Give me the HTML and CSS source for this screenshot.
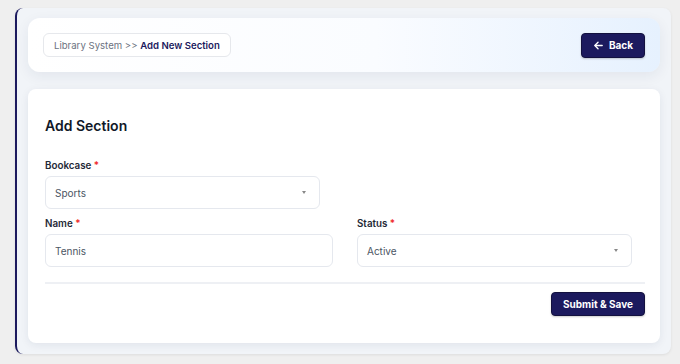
FILE: index.html
```html
<!DOCTYPE html>
<html lang="en">
<head>
  <meta charset="UTF-8" />
  <title>Add New Section</title>
  <link rel="stylesheet" href="styles.css">
</head>
<body>

  <div class="wrapper">
    <div class="page-header">
      <div class="breadcrumb">Library System &gt;&gt; <b>Add New Section</b></div>
      <a class="btn" href="#">
        <svg width="11" height="11" viewBox="0 0 24 24" fill="none" stroke="#fff" stroke-width="3" stroke-linecap="round" stroke-linejoin="round"><path d="M20 12H5"/><path d="M11 5l-7 7 7 7"/></svg>
        Back
      </a>
    </div>

    <div class="card">
      <h2>Add Section</h2>

      <label class="field-label">Bookcase <span class="req">*</span></label>
      <div class="select short">Sports<span class="caret"></span></div>

      <div class="row">
        <div class="col">
          <label class="field-label">Name <span class="req">*</span></label>
          <input class="input" type="text" value="Tennis" />
        </div>
        <div class="col">
          <label class="field-label">Status <span class="req">*</span></label>
          <div class="select short">Active<span class="caret"></span></div>
        </div>
      </div>

      <hr class="divider" />

      <div class="actions">
        <button class="btn">Submit &amp; Save</button>
      </div>
    </div>
  </div>

</body>
</html>
```

FILE: styles.css
```css
body { margin: 0; padding: 8px 9px 10px 15px; background: #efefef; font-family: Inter, "Noto Sans", sans-serif; color: #111827; }
.wrapper { background: #f1f4f8; border-left: 2px solid #1c1a5e; border-radius: 8px; padding: 10px 11px 11px 11px; box-shadow: 0 1px 3px rgba(0,0,0,0.08); }

.page-header { height: 54px; display: flex; align-items: center; justify-content: space-between; padding: 0 15px; border-radius: 12px; background: linear-gradient(90deg, #ffffff 0%, #fafcff 55%, #e6f1fe 100%); box-shadow: 0 4px 14px rgba(30,40,80,0.07); }
.breadcrumb { height: 24px; box-sizing: border-box; display: flex; align-items: center; padding: 0 10px; border: 1px solid #e6e8ec; border-radius: 6px; background: #fff; font-size: 9.6px; color: #6b7280; white-space: pre; }
.breadcrumb b { color: #1c1a5e; font-weight: 600; }

.btn { display: inline-flex; align-items: center; gap: 5px; height: 25px; box-sizing: border-box; padding: 0 11px; background: #1c1a5e; color: #fff; font-family: inherit; font-size: 10px; font-weight: 700; text-decoration: none; border: 1px solid #13113f; border-radius: 4px; box-shadow: 0 1px 2px rgba(0,0,0,0.2); }

.card { margin-top: 17px; background: #fff; border-radius: 8px; padding: 28px 15px 27px 17px; box-shadow: 0 2px 8px rgba(30,40,80,0.08); }
.card h2 { margin: 0 0 24px; font-size: 14px; line-height: 18px; font-weight: 600; color: #111827; }

.field-label { display: block; font-size: 9.8px; line-height: 14px; font-weight: 600; color: #1f2937; margin-bottom: 3px; }
.req { color: #ef1c1c; }

.select, .input { height: 33px; box-sizing: border-box; border: 1px solid #e5e8ee; border-radius: 6px; padding: 0 9px; font-family: inherit; font-size: 10px; color: #4b5563; background: #fff; }
.select { display: flex; align-items: center; justify-content: space-between; padding-right: 13px; }
.select.short { width: 275px; }
.caret { width: 0; height: 0; border-left: 2.5px solid transparent; border-right: 2.5px solid transparent; border-top: 3px solid #888; }
.input { display: block; width: 100%; outline: none; }

.row { display: grid; grid-template-columns: 1fr 1fr; gap: 24px; margin-top: 8px; }

.divider { border: none; border-top: 2px solid #eef0f4; margin: 15px 0 8px; }
.actions { display: flex; justify-content: flex-end; }
.actions .btn { height: 24px; padding: 0 11px; cursor: pointer; }
```
